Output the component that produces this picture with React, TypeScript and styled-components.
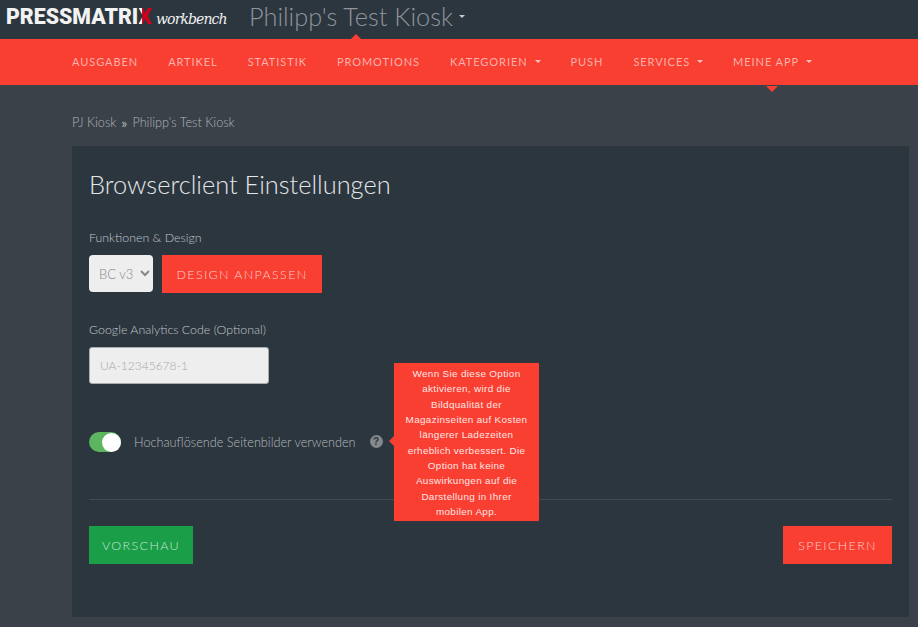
import React from "react";
import styled, { createGlobalStyle } from "styled-components";

const GlobalStyle = createGlobalStyle`
  html, body {
    margin: 0;
    padding: 0;
    background: #3a4149;
    font-family: "Lato", "Noto Sans", sans-serif;
    font-weight: 300;
    color: #c4c8cc;
  }
`;

const Page = styled.div`
  width: 918px;
  height: 627px;
  overflow: hidden;
`;

const TopBar = styled.header`
  height: 39px;
  background: #2c363f;
  display: flex;
  align-items: center;
  padding-left: 6px;
`;

const Logo = styled.div`
  display: flex;
  align-items: baseline;
  width: 243px;
  flex: none;
  margin-top: -6px;
`;

const LogoWord = styled.span`
  font-family: "Roboto", sans-serif;
  font-weight: 900;
  font-size: 21.3px;
  color: #f2f2f2;
`;

const LogoX = styled.span`
  background: linear-gradient(to right, #f2f2f2 28%, #d0021b 28%);
  -webkit-background-clip: text;
  background-clip: text;
  color: transparent;
`;

const LogoScript = styled.span`
  font-family: "DejaVu Serif", serif;
  font-style: italic;
  font-size: 14px;
  color: #f2f2f2;
  margin-left: 4px;
  letter-spacing: -0.9px;
`;

const KioskTitle = styled.div`
  position: relative;
  font-size: 25.3px;
  color: #8f959b;
  display: flex;
  align-items: center;
  gap: 6px;
  margin-top: -7px;
  &::after {
    content: "";
    position: absolute;
    left: 101px;
    bottom: -9px;
    border: 6px solid transparent;
    border-top: 0;
    border-bottom-color: #f93f32;
  }
`;

const Caret = styled.span<{ $color: string }>`
  display: inline-block;
  width: 0;
  height: 0;
  border-left: 3px solid transparent;
  border-right: 3px solid transparent;
  border-top: 3px solid ${(p) => p.$color};
`;

const Nav = styled.nav`
  height: 46px;
  box-sizing: border-box;
  padding: 0 0 1px 72px;
  background: #f93f32;
  display: flex;
  align-items: center;
  gap: 30px;
`;

const NavItem = styled.a<{ $active?: boolean }>`
  position: relative;
  font-size: 11px;
  font-weight: 400;
  letter-spacing: 0.94px;
  color: #fbb0aa;
  display: flex;
  align-items: center;
  gap: 7px;
  ${(p) =>
    p.$active &&
    `
    &::after {
      content: "";
      position: absolute;
      left: 33px;
      top: 31px;
      border: 6px solid transparent;
      border-bottom: 0;
      border-top-color: #f93f32;
    }
  `}
`;

const Content = styled.main`
  padding: 29px 9px 0 72px;
`;

const Breadcrumb = styled.div`
  display: flex;
  align-items: center;
  gap: 5px;
  font-size: 12.7px;
  line-height: 17px;
  color: #b0b4b8;
  margin-bottom: 15px;
`;

const Separator = styled.span`
  font-size: 14px;
  font-weight: 400;
`;

const Panel = styled.section`
  position: relative;
  height: 471px;
  box-sizing: border-box;
  background: #2c363f;
  padding: 23px 17px 0;
`;

const Title = styled.h1`
  margin: 0 0 31px;
  font-size: 25.4px;
  line-height: 30px;
  font-weight: 300;
  color: #e4e6e8;
`;

const FieldLabel = styled.label`
  display: block;
  font-size: 12.4px;
  line-height: 17px;
  margin-top: -1px;
  margin-bottom: 9px;
  color: #c0c4c8;
`;

const DesignRow = styled.div`
  display: flex;
  align-items: flex-start;
  gap: 9px;
  margin-bottom: 29px;
`;

const Select = styled.select`
  width: 64px;
  height: 37px;
  box-sizing: border-box;
  border: 0;
  border-radius: 4px;
  background: #eeeeee;
  color: #83878c;
  font: 300 13px "Lato", sans-serif;
  padding-left: 6px;
`;

const Button = styled.button<{ $bg: string; $width: number }>`
  width: ${(p) => p.$width}px;
  height: 38px;
  padding: 0;
  border: 0;
  background: ${(p) => p.$bg};
  color: rgba(255, 255, 255, 0.75);
  font: 300 12.5px "Lato", sans-serif;
  letter-spacing: 1.35px;
`;

const CodeInput = styled.input`
  display: block;
  width: 180px;
  height: 37px;
  box-sizing: border-box;
  border: 1px solid #a9adb1;
  border-radius: 3px;
  background: #eeeeee;
  padding: 0 10px;
  font: 300 12px "Lato", sans-serif;
  &::placeholder {
    color: #a4a6a8;
    opacity: 1;
  }
`;

const ToggleRow = styled.div`
  display: flex;
  align-items: center;
  margin-top: 48px;
  height: 20px;
`;

const Toggle = styled.span`
  width: 32px;
  height: 20px;
  border-radius: 10px;
  background: #5cb660;
  display: flex;
  justify-content: flex-end;
  align-items: center;
  margin-right: 13px;
  &::after {
    content: "";
    width: 19px;
    height: 19px;
    border-radius: 50%;
    background: #ffffff;
  }
`;

const ToggleLabel = styled.span`
  font-size: 12.7px;
  color: #b4b8bc;
`;

const Help = styled.span`
  margin-left: 14px;
  margin-top: -2px;
  width: 13px;
  height: 13px;
  border-radius: 50%;
  background: #85888c;
  color: #2c363f;
  font: 700 10px/13px "Liberation Sans", sans-serif;
  text-align: center;
`;

const Tooltip = styled.div`
  position: absolute;
  left: 322px;
  top: 217px;
  width: 145px;
  height: 158px;
  box-sizing: border-box;
  padding: 3px 8px;
  background: #f93f32;
  border-radius: 1px;
  box-shadow: 0 0 1px #b02a22;
  color: #ffe6e3;
  font: 400 9.9px/15.33px "Liberation Sans", sans-serif;
  letter-spacing: 0.34px;
  text-align: center;
  &::before {
    content: "";
    position: absolute;
    left: -5px;
    top: 73px;
    border: 5px solid transparent;
    border-left: 0;
    border-right-color: #f93f32;
  }
`;

const Divider = styled.hr`
  border: 0;
  border-top: 1px solid #424a53;
  margin: 47px 0 26px;
`;

const Actions = styled.div`
  display: flex;
  justify-content: space-between;
`;

const tabs = [
  { label: "AUSGABEN" },
  { label: "ARTIKEL" },
  { label: "STATISTIK" },
  { label: "PROMOTIONS" },
  { label: "KATEGORIEN", caret: true },
  { label: "PUSH" },
  { label: "SERVICES", caret: true },
  { label: "MEINE APP", caret: true, active: true },
];

const App: React.FC = () => {
  return (
    <Page>
      <GlobalStyle />
      <TopBar>
        <Logo>
          <LogoWord>
            PRESSMATRI<LogoX>X</LogoX>
          </LogoWord>
          <LogoScript>workbench</LogoScript>
        </Logo>
        <KioskTitle>
          Philipp's Test Kiosk <Caret $color="#c4c8cc" />
        </KioskTitle>
      </TopBar>
      <Nav>
        {tabs.map((tab) => (
          <NavItem key={tab.label} $active={tab.active}>
            {tab.label}
            {tab.caret && <Caret $color="#fbc5c0" />}
          </NavItem>
        ))}
      </Nav>
      <Content>
        <Breadcrumb>
          <span>PJ Kiosk</span>
          <Separator>»</Separator>
          <span>Philipp's Test Kiosk</span>
        </Breadcrumb>
        <Panel>
          <Title>Browserclient Einstellungen</Title>
          <FieldLabel>Funktionen &amp; Design</FieldLabel>
          <DesignRow>
            <Select defaultValue="BC v3">
              <option>BC v3</option>
            </Select>
            <Button $bg="#f93f32" $width={160}>DESIGN ANPASSEN</Button>
          </DesignRow>
          <FieldLabel>Google Analytics Code (Optional)</FieldLabel>
          <CodeInput placeholder="UA-12345678-1" readOnly />
          <ToggleRow>
            <Toggle />
            <ToggleLabel>Hochauflösende Seitenbilder verwenden</ToggleLabel>
            <Help>?</Help>
          </ToggleRow>
          <Tooltip>
            Wenn Sie diese Option aktivieren, wird die Bildqualität der
            Magazinseiten auf Kosten längerer Ladezeiten erheblich verbessert.
            Die Option hat keine Auswirkungen auf die Darstellung in Ihrer
            mobilen App.
          </Tooltip>
          <Divider />
          <Actions>
            <Button $bg="#1b9e48" $width={104}>VORSCHAU</Button>
            <Button $bg="#f93f32" $width={109}>SPEICHERN</Button>
          </Actions>
        </Panel>
      </Content>
    </Page>
  );
};

export default App;
